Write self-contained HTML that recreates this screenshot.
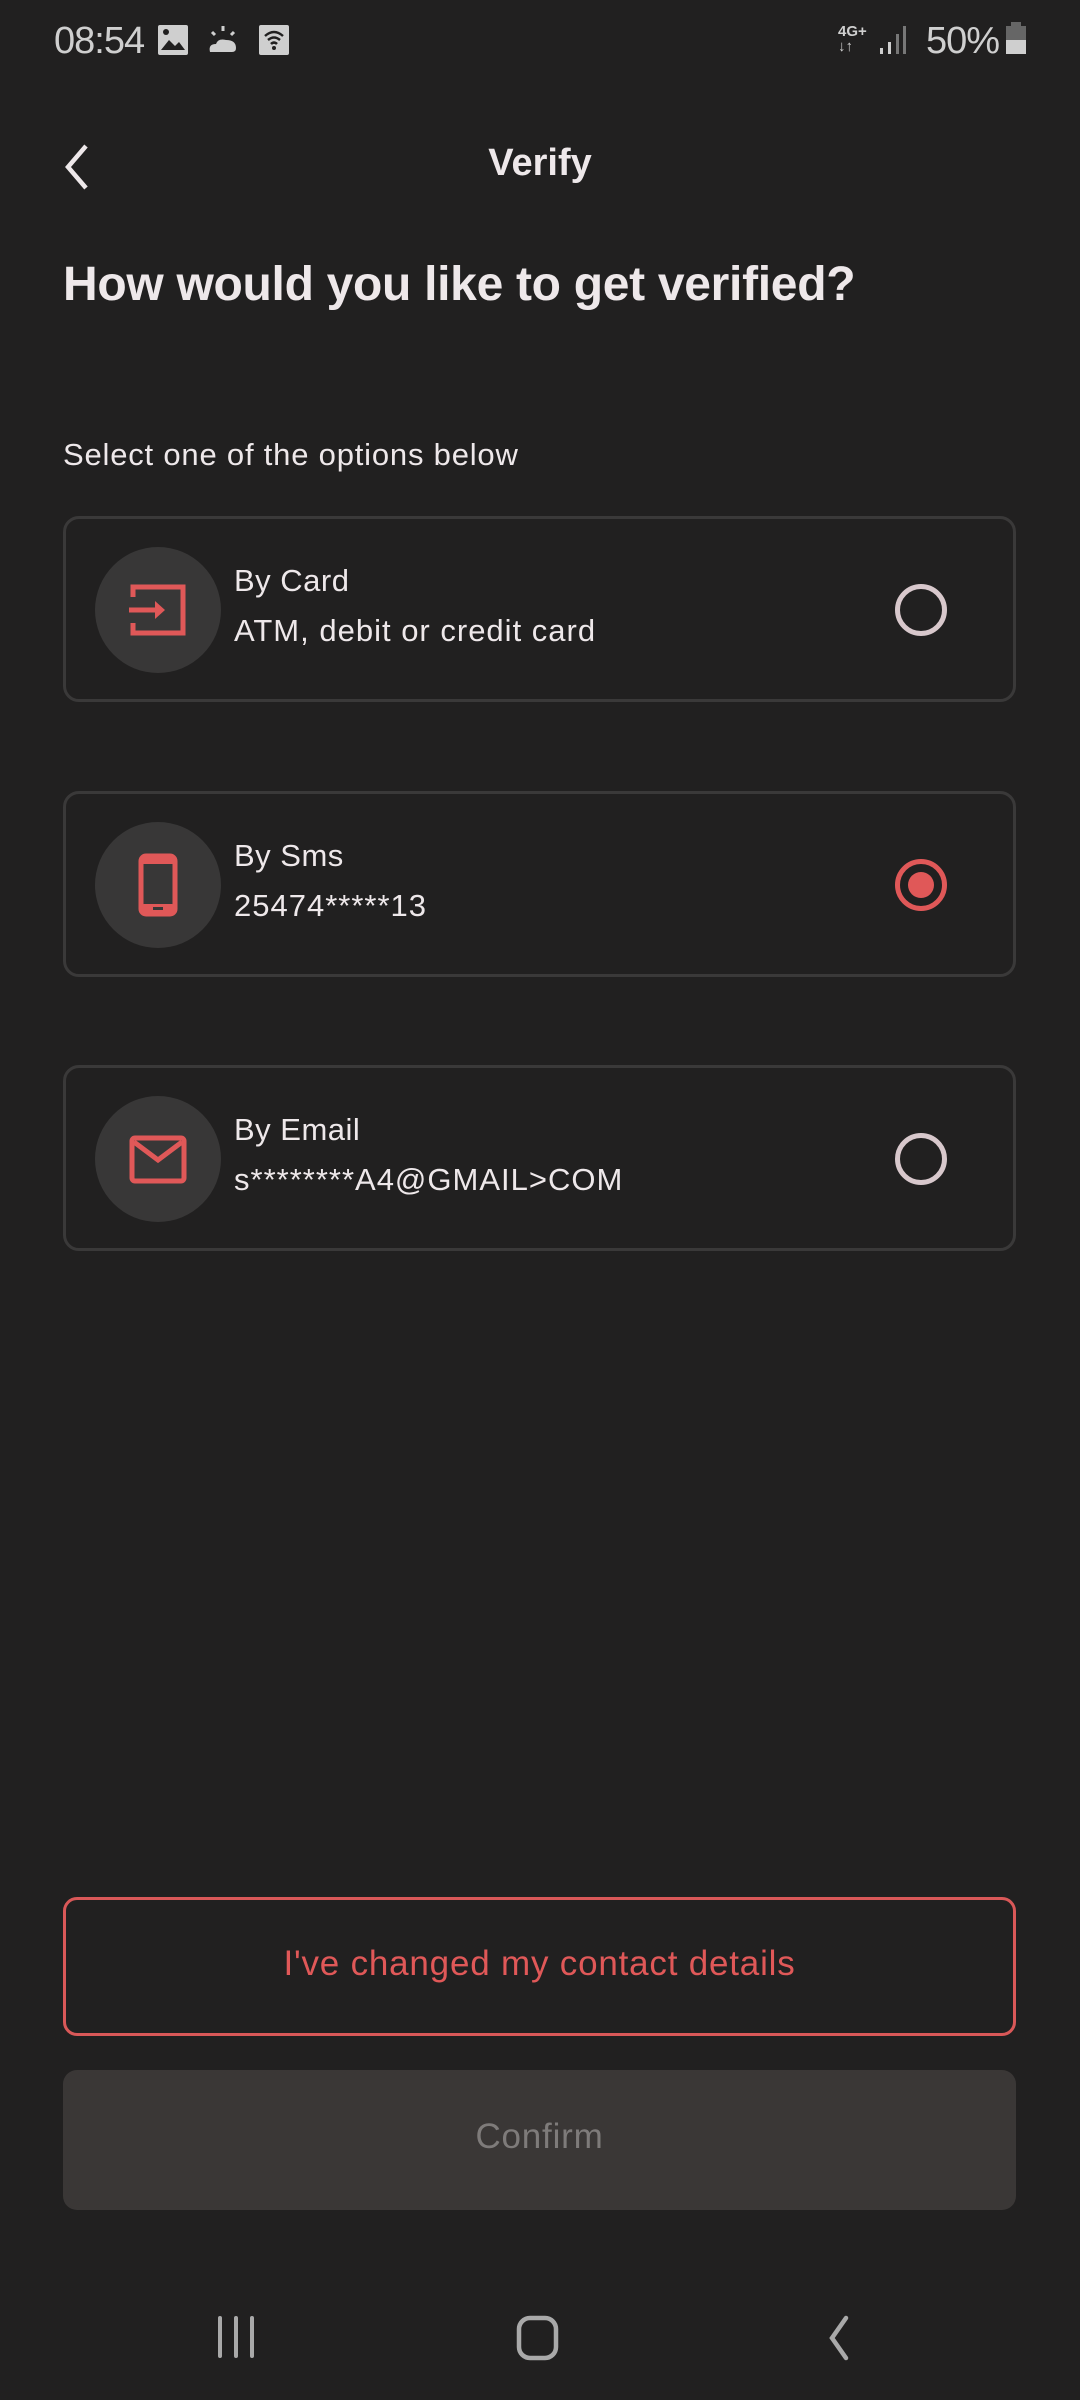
<!DOCTYPE html>
<html><head><meta charset="utf-8"><style>
*{margin:0;padding:0;box-sizing:border-box}
body{width:1080px;height:2400px;background:#212020;font-family:"Liberation Sans",sans-serif;position:relative;overflow:hidden;color:#eee8ea}
.a{position:absolute}
.card{position:absolute;left:63px;width:953px;height:186px;border:3px solid #3a3939;border-radius:16px}
.ic{position:absolute;left:29px;top:28px;width:126px;height:126px;border-radius:50%;background:#383737}
.t1{position:absolute;left:168px;top:44px;font-size:31px;color:#eee8ea;letter-spacing:0.5px}
.t2{position:absolute;left:168px;top:94px;font-size:31px;color:#eee8ea;letter-spacing:1px}
.rad{position:absolute;left:829px;top:65px;width:52px;height:52px;border-radius:50%;border:5px solid #d8c8cc}
.rad.on{border-color:#e05858}
.rad.on::after{content:"";position:absolute;left:8px;top:8px;width:26px;height:26px;border-radius:50%;background:#e05858}
</style></head><body>
<!-- status bar -->
<div class="a" style="left:54px;top:20px;font-size:38px;color:#cfcfcf;letter-spacing:-1px">08:54</div>
<svg class="a" style="left:157px;top:24px" width="32" height="32"><rect x="1" y="1" width="30" height="30" rx="2" fill="#cfcfcf"/><path d="M4 26 L12 16 L18 22 L22 18 L28 26Z" fill="#212020"/><circle cx="9" cy="8" r="3" fill="#212020"/></svg>
<svg class="a" style="left:206px;top:24px" width="34" height="32"><path d="M4 28 Q2 20 10 20 Q12 14 20 16 Q30 16 30 24 Q30 28 26 28Z" fill="#cfcfcf"/><path d="M17 2v5M6 8l3 3M28 8l-3 3" stroke="#cfcfcf" stroke-width="3"/></svg>
<svg class="a" style="left:258px;top:24px" width="32" height="32"><rect x="1" y="1" width="30" height="30" rx="2" fill="#cfcfcf"/><path d="M7 12 Q16 4 25 12 M10 16 Q16 11 22 16 M13 20 Q16 17 19 20" stroke="#212020" stroke-width="2.5" fill="none"/><circle cx="16" cy="24" r="2" fill="#212020"/></svg>
<div class="a" style="left:838px;top:24px;font-size:15px;font-weight:bold;color:#cfcfcf;line-height:15px">4G+<br>↓↑</div>
<svg class="a" style="left:878px;top:24px" width="30" height="32"><rect x="2" y="24" width="3" height="6" fill="#cfcfcf"/><rect x="10" y="18" width="3" height="12" fill="#cfcfcf"/><rect x="18" y="10" width="3" height="20" fill="#777"/><rect x="25" y="2" width="3" height="28" fill="#777"/></svg>
<div class="a" style="left:926px;top:20px;font-size:38px;color:#cfcfcf;letter-spacing:-1px">50%</div>
<svg class="a" style="left:1004px;top:22px" width="24" height="36"><rect x="7" y="0" width="10" height="4" fill="#666"/><rect x="2" y="4" width="20" height="14" fill="#666"/><rect x="2" y="18" width="20" height="14" fill="#cfcfcf"/></svg>
<!-- header -->
<svg class="a" style="left:58px;top:142px" width="36" height="50"><path d="M28 4 L10 25 L28 46" stroke="#eee8ea" stroke-width="4.5" fill="none"/></svg>
<div class="a" style="left:0;width:1080px;top:142px;text-align:center;font-size:38px;font-weight:bold">Verify</div>
<div class="a" style="left:63px;top:257px;font-size:48px;font-weight:bold;letter-spacing:-0.3px">How would you like to get verified?</div>
<div class="a" style="left:63px;top:437px;font-size:31px;letter-spacing:0.8px">Select one of the options below</div>
<!-- cards -->
<div class="card" style="top:516px"><div class="ic"><svg width="126" height="126"><path d="M38 50 V40 H88 V86 H38 V76" stroke="#e05858" stroke-width="5" fill="none"/><path d="M34 63 H64" stroke="#e05858" stroke-width="5"/><path d="M60 54 L70 63 L60 72Z" fill="#e05858"/></svg></div><div class="t1">By Card</div><div class="t2">ATM, debit or credit card</div><div class="rad"></div></div>
<div class="card" style="top:791px"><div class="ic"><svg width="126" height="126"><rect x="46" y="34" width="34" height="58" rx="5" stroke="#e05858" stroke-width="5" fill="none"/><rect x="46" y="34" width="34" height="8" fill="#e05858"/><rect x="46" y="82" width="34" height="10" rx="3" fill="#e05858"/><rect x="58" y="85" width="10" height="3" fill="#383737"/></svg></div><div class="t1">By Sms</div><div class="t2">25474*****13</div><div class="rad on"></div></div>
<div class="card" style="top:1065px"><div class="ic"><svg width="126" height="126"><rect x="37" y="42" width="52" height="43" rx="3" stroke="#e05858" stroke-width="5" fill="none"/><path d="M39 46 L63 64 L87 46" stroke="#e05858" stroke-width="5" fill="none"/></svg></div><div class="t1">By Email</div><div class="t2">s********A4@GMAIL&gt;COM</div><div class="rad"></div></div>
<!-- buttons -->
<div class="a" style="left:63px;top:1897px;width:953px;height:139px;border:3px solid #d95858;border-radius:14px;text-align:center;line-height:128px;font-size:35px;letter-spacing:0.8px;color:#e05858">I've changed my contact details</div>
<div class="a" style="left:63px;top:2070px;width:953px;height:140px;background:#3a3736;border-radius:14px;text-align:center;line-height:134px;font-size:35px;letter-spacing:0.8px;color:#7e7b7a">Confirm</div>
<!-- nav -->
<svg class="a" style="left:214px;top:2315px" width="44" height="44"><path d="M6 3 V41 M22 3 V41 M38 3 V41" stroke="#a9a9a9" stroke-width="4" stroke-linecap="round"/></svg>
<svg class="a" style="left:516px;top:2315px" width="46" height="46"><rect x="3" y="3" width="37" height="40" rx="11" stroke="#a9a9a9" stroke-width="4.5" fill="none"/></svg>
<svg class="a" style="left:824px;top:2315px" width="30" height="46"><path d="M22 3 L8 23 L22 43" stroke="#a9a9a9" stroke-width="4.5" fill="none" stroke-linecap="round"/></svg>
</body></html>
